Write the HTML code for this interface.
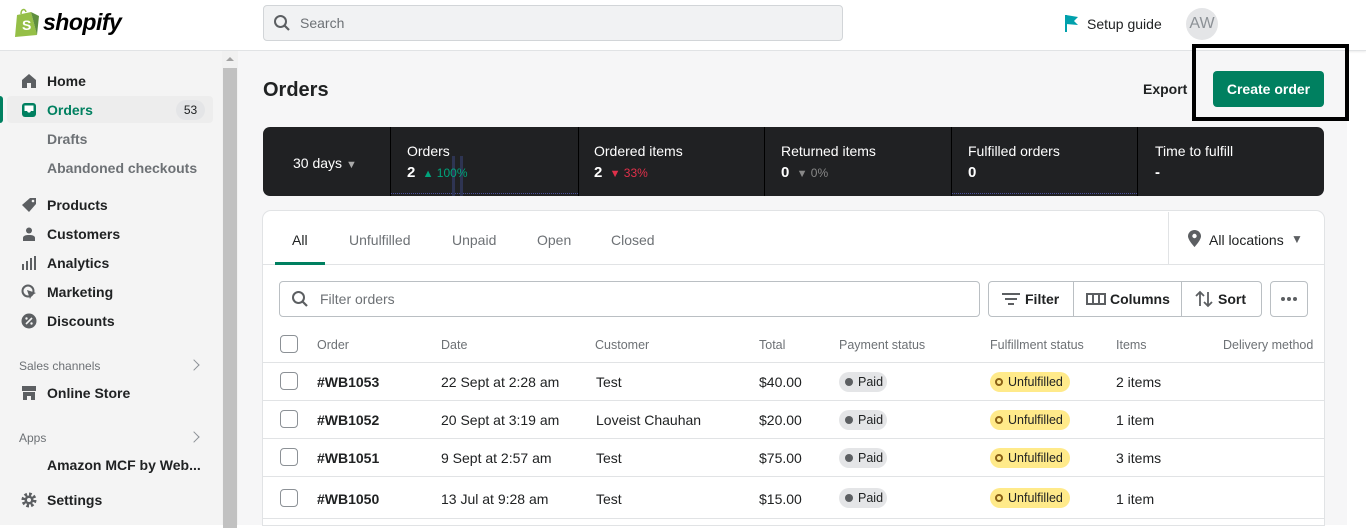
<!DOCTYPE html>
<html><head><meta charset="utf-8"><style>
*{box-sizing:border-box;margin:0;padding:0}
body{width:1366px;height:525px;overflow:hidden;background:#fff;font-family:"Liberation Sans",sans-serif;color:#202223;font-size:14px;position:relative}
.abs{position:absolute}
.hdr{left:0;top:0;width:1366px;height:51px;background:#fff;border-bottom:1px solid #e1e3e5;box-shadow:0 1px 2px rgba(0,0,0,.08)}
.side{left:0;top:51px;width:222px;height:474px;background:#f4f4f4}
.sb{left:222px;top:51px;width:16px;height:474px;background:#f1f1f1}
.main{left:238px;top:51px;width:1109px;height:474px;background:#f6f6f7}
.nav{position:absolute;left:47px;font-size:14px;font-weight:bold;color:#202223}
.sub{position:absolute;left:47px;font-size:14px;color:#6d7175;font-weight:bold}
.ic{position:absolute;left:21px;width:16px;height:16px}
.sec{position:absolute;left:19px;font-size:12px;color:#6d7175}
.tx{position:absolute;white-space:nowrap}
.card{left:263px;top:211px;width:1061px;height:314px;background:#fff;border-radius:8px 8px 0 0;box-shadow:0 0 0 1px #e1e3e5}
.line{position:absolute;left:263px;width:1061px;height:1px;background:#e1e3e5}
.cb{position:absolute;left:280px;width:18px;height:18px;border:1.5px solid #8c9196;border-radius:4px;background:#fff}
.paid{position:absolute;left:839px;width:48px;height:20px;border-radius:10px;background:#e4e5e7;font-size:12.5px;color:#202223;padding:3px 0 0 19px}
.paid:before{content:"";position:absolute;left:6px;top:6px;width:8px;height:8px;border-radius:50%;background:#5c5f62}
.unf{position:absolute;left:990px;width:80px;height:20px;border-radius:10px;background:#ffea8a;font-size:12.5px;color:#202223;padding:3px 0 0 18px}
.unf:before{content:"";position:absolute;left:5px;top:6px;width:8px;height:8px;border-radius:50%;border:2px solid #8a6116;box-sizing:border-box}
.th{position:absolute;top:338px;font-size:12.5px;color:#6d7175}
.btn{position:absolute;top:281px;height:36px;border:1px solid #babfc3;background:#fff;font-weight:bold;font-size:14px;color:#202223}
.chev{position:absolute;left:190px;width:8px;height:8px;border-right:1.5px solid #8c9196;border-top:1.5px solid #8c9196;transform:rotate(45deg)}
</style></head><body>
<div class="abs hdr"></div>
<svg class="abs" style="left:14px;top:8px" width="26" height="30" viewBox="0 0 26 30"><path d="M3 7 L17 4 L23 27 L1 29 Z" fill="#95bf47"/><path d="M17 4 L23 27 L25 8 Z" fill="#5e8e3e"/><path d="M7 6 C7 1 11 0 12 4" fill="none" stroke="#95bf47" stroke-width="1.5"/><text x="8" y="22" font-family="Liberation Sans" font-weight="bold" font-size="14" fill="#fff">S</text></svg>
<div class="tx" style="left:43px;top:9px;font-size:23px;font-weight:bold;font-style:italic;letter-spacing:-0.5px;color:#000">shopify</div>
<div class="abs" style="left:263px;top:5px;width:580px;height:36px;background:#f1f2f3;border:1px solid #d2d5d8;border-radius:4px"></div>
<svg class="abs" style="left:273px;top:14px" width="18" height="18" viewBox="0 0 18 18"><circle cx="7.5" cy="7.5" r="5.5" fill="none" stroke="#5c5f62" stroke-width="2"/><path d="M11.5 11.5 L16 16" stroke="#5c5f62" stroke-width="2.2"/></svg>
<div class="tx" style="left:300px;top:15px;color:#6d7175;font-size:14px">Search</div>
<svg class="abs" style="left:1064px;top:14px" width="16" height="18" viewBox="0 0 16 18"><path d="M2 1 L2 18" stroke="#00a0ac" stroke-width="2"/><path d="M2 1 L14 3 L10 7 L14 11 L2 10 Z" fill="#00a0ac"/></svg>
<div class="tx" style="left:1087px;top:16px;font-size:14px;color:#202223">Setup guide</div>
<div class="abs" style="left:1186px;top:8px;width:32px;height:32px;border-radius:50%;background:#e4e5e7;color:#8c9196;font-size:16px;text-align:center;line-height:32px">AW</div>

<div class="abs side"></div>
<div class="abs sb"><div style="position:absolute;left:1px;top:17px;width:14px;height:460px;background:#c1c1c1"></div><div style="position:absolute;left:4px;top:6px;border:4px solid transparent;border-bottom:4px solid #a3a3a3;border-top:0"></div></div>
<svg class="ic" style="top:73px" viewBox="0 0 16 16"><path d="M8 1 L15 7 V15 H10 V10 H6 V15 H1 V7 Z" fill="#5c5f62"/></svg>
<div class="nav" style="top:73px">Home</div>
<div class="abs" style="left:7px;top:96px;width:206px;height:27px;background:#ededed;border-radius:4px"></div>
<div class="abs" style="left:0;top:96px;width:3px;height:27px;background:#008060;border-radius:0 3px 3px 0"></div>
<svg class="ic" style="top:102px" viewBox="0 0 16 16"><rect x="1" y="1" width="14" height="14" rx="3" fill="#008060"/><path d="M3.5 3.5 H12.5 V9 H10 L9 10.5 H7 L6 9 H3.5 Z" fill="#fff"/></svg>
<div class="nav" style="top:102px;color:#008060">Orders</div>
<div class="abs" style="left:176px;top:100px;width:29px;height:20px;border-radius:10px;background:#e4e5e7;font-size:12px;text-align:center;line-height:20px">53</div>
<div class="sub" style="top:131px">Drafts</div>
<div class="sub" style="top:160px">Abandoned checkouts</div>
<svg class="ic" style="top:197px" viewBox="0 0 16 16"><path d="M9 1 H15 V7 L8 15 L1 8 Z" fill="#5c5f62"/><circle cx="12" cy="4" r="1.3" fill="#f4f4f4"/></svg>
<div class="nav" style="top:197px">Products</div>
<svg class="ic" style="top:226px" viewBox="0 0 16 16"><circle cx="8" cy="4.5" r="3" fill="#5c5f62"/><path d="M2 15 V12 C2 9.5 5 9 8 9 C11 9 14 9.5 14 12 V15 Z" fill="#5c5f62"/></svg>
<div class="nav" style="top:226px">Customers</div>
<svg class="ic" style="top:255px" viewBox="0 0 16 16"><path d="M2 9 V15 M6 6 V15 M10 3 V15 M14 1 V15" stroke="#5c5f62" stroke-width="2"/></svg>
<div class="nav" style="top:255px">Analytics</div>
<svg class="ic" style="top:284px" viewBox="0 0 16 16"><circle cx="7" cy="7" r="5.5" fill="none" stroke="#5c5f62" stroke-width="2"/><path d="M6 6 L15 9 L11 11 L9 15 Z" fill="#5c5f62"/></svg>
<div class="nav" style="top:284px">Marketing</div>
<svg class="ic" style="top:313px" viewBox="0 0 16 16"><circle cx="8" cy="8" r="7.5" fill="#5c5f62"/><path d="M5 11 L11 5" stroke="#f4f4f4" stroke-width="1.6"/><circle cx="5.5" cy="5.5" r="1.2" fill="#f4f4f4"/><circle cx="10.5" cy="10.5" r="1.2" fill="#f4f4f4"/></svg>
<div class="nav" style="top:313px">Discounts</div>
<div class="sec" style="top:359px">Sales channels</div>
<div class="chev" style="top:361px"></div>
<svg class="ic" style="top:385px" viewBox="0 0 16 16"><path d="M1 1 H15 V6 H1 Z" fill="#5c5f62"/><path d="M2 7 H14 V15 H10 V11 H6 V15 H2 Z" fill="#5c5f62"/></svg>
<div class="nav" style="top:385px">Online Store</div>
<div class="sec" style="top:431px">Apps</div>
<div class="chev" style="top:433px"></div>
<div class="nav" style="top:457px">Amazon MCF by Web...</div>
<svg class="ic" style="top:492px" viewBox="0 0 16 16"><circle cx="8" cy="8" r="5.5" fill="none" stroke="#5c5f62" stroke-width="4" stroke-dasharray="2.4 1.9"/><circle cx="8" cy="8" r="4.5" fill="#5c5f62"/><circle cx="8" cy="8" r="2" fill="#f4f4f4"/></svg>
<div class="nav" style="top:492px">Settings</div>

<div class="abs main"></div>
<div class="tx" style="left:263px;top:79px;font-size:20px;font-weight:bold">Orders</div>
<div class="tx" style="left:1143px;top:81px;font-size:14px;font-weight:bold">Export</div>
<div class="abs" style="left:1213px;top:71px;width:111px;height:36px;background:#008060;border-radius:4px;color:#fff;font-weight:bold;font-size:14px;text-align:center;line-height:36px">Create order</div>
<div class="abs" style="left:1192px;top:44px;width:157px;height:77px;border:4px solid #000"></div>

<div class="abs" style="left:263px;top:127px;width:1061px;height:69px;background:#202123;border-radius:7px"></div>
<div class="abs" style="left:390px;top:127px;width:1px;height:69px;background:#000"></div>
<div class="abs" style="left:578px;top:127px;width:1px;height:69px;background:#000"></div>
<div class="abs" style="left:764px;top:127px;width:1px;height:69px;background:#000"></div>
<div class="abs" style="left:951px;top:127px;width:1px;height:69px;background:#000"></div>
<div class="abs" style="left:1137px;top:127px;width:1px;height:69px;background:#000"></div>
<div class="abs" style="left:391px;top:193px;width:187px;height:2px;border-top:1px dotted #4a4f9a"></div>
<div class="abs" style="left:952px;top:193px;width:185px;height:2px;border-top:1px dotted #4a4f9a"></div>
<div class="abs" style="left:452px;top:156px;width:3px;height:40px;background:#2e3452"></div>
<div class="abs" style="left:460px;top:156px;width:3px;height:40px;background:#2e3452"></div>
<div class="tx" style="left:293px;top:155px;color:#fff;font-size:14px">30 days <span style="font-size:11px;color:#aaa">▼</span></div>
<div class="tx" style="left:407px;top:143px;color:#fff">Orders</div>
<div class="tx" style="left:407px;top:164px;color:#fff;font-weight:bold;font-size:15px">2 <span style="font-size:11px;color:#00a47c;font-weight:normal">&nbsp;▲</span><span style="font-size:12px;color:#00a47c;font-weight:normal"> 100%</span></div>
<div class="tx" style="left:594px;top:143px;color:#fff">Ordered items</div>
<div class="tx" style="left:594px;top:164px;color:#fff;font-weight:bold;font-size:15px">2 <span style="font-size:11px;color:#e0304a;font-weight:normal">&nbsp;▼</span><span style="font-size:12px;color:#e0304a;font-weight:normal"> 33%</span></div>
<div class="tx" style="left:781px;top:143px;color:#fff">Returned items</div>
<div class="tx" style="left:781px;top:164px;color:#fff;font-weight:bold;font-size:15px">0 <span style="font-size:11px;color:#888;font-weight:normal">&nbsp;▼</span><span style="font-size:12px;color:#888;font-weight:normal"> 0%</span></div>
<div class="tx" style="left:968px;top:143px;color:#fff">Fulfilled orders</div>
<div class="tx" style="left:968px;top:164px;color:#fff;font-weight:bold;font-size:15px">0</div>
<div class="tx" style="left:1155px;top:143px;color:#fff">Time to fulfill</div>
<div class="tx" style="left:1155px;top:164px;color:#fff;font-weight:bold;font-size:15px">-</div>

<div class="abs card"></div>
<div class="abs" style="left:1168px;top:212px;width:1px;height:52px;background:#e1e3e5"></div>
<div class="line" style="top:264px"></div>
<div class="tx" style="left:292px;top:232px;color:#202223">All</div>
<div class="abs" style="left:275px;top:262px;width:50px;height:3px;background:#008060"></div>
<div class="tx" style="left:349px;top:232px;color:#6d7175">Unfulfilled</div>
<div class="tx" style="left:452px;top:232px;color:#6d7175">Unpaid</div>
<div class="tx" style="left:537px;top:232px;color:#6d7175">Open</div>
<div class="tx" style="left:611px;top:232px;color:#6d7175">Closed</div>
<svg class="abs" style="left:1188px;top:230px" width="13" height="17" viewBox="0 0 13 17"><path d="M6.5 0 C10 0 13 2.7 13 6.2 C13 10 6.5 17 6.5 17 C6.5 17 0 10 0 6.2 C0 2.7 3 0 6.5 0 Z" fill="#5c5f62"/><circle cx="6.5" cy="6" r="2.2" fill="#fff"/></svg>
<div class="tx" style="left:1209px;top:232px">All locations</div>
<div class="tx" style="left:1291px;top:232px;font-size:12px;color:#5c5f62">▼</div>

<div class="abs" style="left:279px;top:281px;width:701px;height:36px;border:1px solid #babfc3;border-radius:4px;background:#fff"></div>
<svg class="abs" style="left:291px;top:290px" width="18" height="18" viewBox="0 0 18 18"><circle cx="7.5" cy="7.5" r="5.5" fill="none" stroke="#5c5f62" stroke-width="2"/><path d="M11.5 11.5 L16 16" stroke="#5c5f62" stroke-width="2.2"/></svg>
<div class="tx" style="left:320px;top:291px;color:#6d7175">Filter orders</div>
<div class="btn" style="left:988px;width:86px;border-radius:4px 0 0 4px"></div>
<div class="btn" style="left:1073px;width:109px"></div>
<div class="btn" style="left:1181px;width:81px;border-radius:0 4px 4px 0"></div>
<div class="btn" style="left:1270px;width:38px;border-radius:4px"></div>
<svg class="abs" style="left:1001px;top:292px" width="20" height="14" viewBox="0 0 20 14"><path d="M1 2 H19 M4 7 H16 M7 12 H13" stroke="#5c5f62" stroke-width="2"/></svg>
<div class="tx" style="left:1025px;top:291px;font-weight:bold">Filter</div>
<svg class="abs" style="left:1086px;top:293px" width="20" height="12" viewBox="0 0 20 12"><rect x="1" y="1" width="18" height="10" fill="none" stroke="#5c5f62" stroke-width="2"/><path d="M7 1 V11 M13 1 V11" stroke="#5c5f62" stroke-width="2"/></svg>
<div class="tx" style="left:1110px;top:291px;font-weight:bold">Columns</div>
<svg class="abs" style="left:1195px;top:290px" width="18" height="18" viewBox="0 0 18 18"><path d="M5 16 V2 M1 6 L5 2 L9 6 M13 2 V16 M9 12 L13 16 L17 12" fill="none" stroke="#5c5f62" stroke-width="1.8"/></svg>
<div class="tx" style="left:1218px;top:291px;font-weight:bold">Sort</div>
<svg class="abs" style="left:1280px;top:296px" width="18" height="6" viewBox="0 0 18 6"><circle cx="3" cy="3" r="2" fill="#5c5f62"/><circle cx="9" cy="3" r="2" fill="#5c5f62"/><circle cx="15" cy="3" r="2" fill="#5c5f62"/></svg>

<div class="cb" style="top:335px"></div>
<div class="th" style="left:317px">Order</div>
<div class="th" style="left:441px">Date</div>
<div class="th" style="left:595px">Customer</div>
<div class="th" style="left:759px">Total</div>
<div class="th" style="left:839px">Payment status</div>
<div class="th" style="left:990px">Fulfillment status</div>
<div class="th" style="left:1116px">Items</div>
<div class="th" style="left:1223px">Delivery method</div>
<div class="line" style="top:362px"></div>

<div class="cb" style="top:372px"></div>
<div class="tx" style="left:317px;top:374px;font-weight:bold">#WB1053</div>
<div class="tx" style="left:441px;top:374px">22 Sept at 2:28 am</div>
<div class="tx" style="left:596px;top:374px">Test</div>
<div class="tx" style="left:759px;top:374px">$40.00</div>
<div class="paid" style="top:372px">Paid</div>
<div class="unf" style="top:372px">Unfulfilled</div>
<div class="tx" style="left:1116px;top:374px">2 items</div>
<div class="line" style="top:400px"></div>

<div class="cb" style="top:410px"></div>
<div class="tx" style="left:317px;top:412px;font-weight:bold">#WB1052</div>
<div class="tx" style="left:441px;top:412px">20 Sept at 3:19 am</div>
<div class="tx" style="left:596px;top:412px">Loveist Chauhan</div>
<div class="tx" style="left:759px;top:412px">$20.00</div>
<div class="paid" style="top:410px">Paid</div>
<div class="unf" style="top:410px">Unfulfilled</div>
<div class="tx" style="left:1116px;top:412px">1 item</div>
<div class="line" style="top:438px"></div>

<div class="cb" style="top:448px"></div>
<div class="tx" style="left:317px;top:450px;font-weight:bold">#WB1051</div>
<div class="tx" style="left:441px;top:450px">9 Sept at 2:57 am</div>
<div class="tx" style="left:596px;top:450px">Test</div>
<div class="tx" style="left:759px;top:450px">$75.00</div>
<div class="paid" style="top:448px">Paid</div>
<div class="unf" style="top:448px">Unfulfilled</div>
<div class="tx" style="left:1116px;top:450px">3 items</div>
<div class="line" style="top:476px"></div>

<div class="cb" style="top:489px"></div>
<div class="tx" style="left:317px;top:491px;font-weight:bold">#WB1050</div>
<div class="tx" style="left:441px;top:491px">13 Jul at 9:28 am</div>
<div class="tx" style="left:596px;top:491px">Test</div>
<div class="tx" style="left:759px;top:491px">$15.00</div>
<div class="paid" style="top:488px">Paid</div>
<div class="unf" style="top:488px">Unfulfilled</div>
<div class="tx" style="left:1116px;top:491px">1 item</div>
<div class="line" style="top:518px"></div>
</body></html>
